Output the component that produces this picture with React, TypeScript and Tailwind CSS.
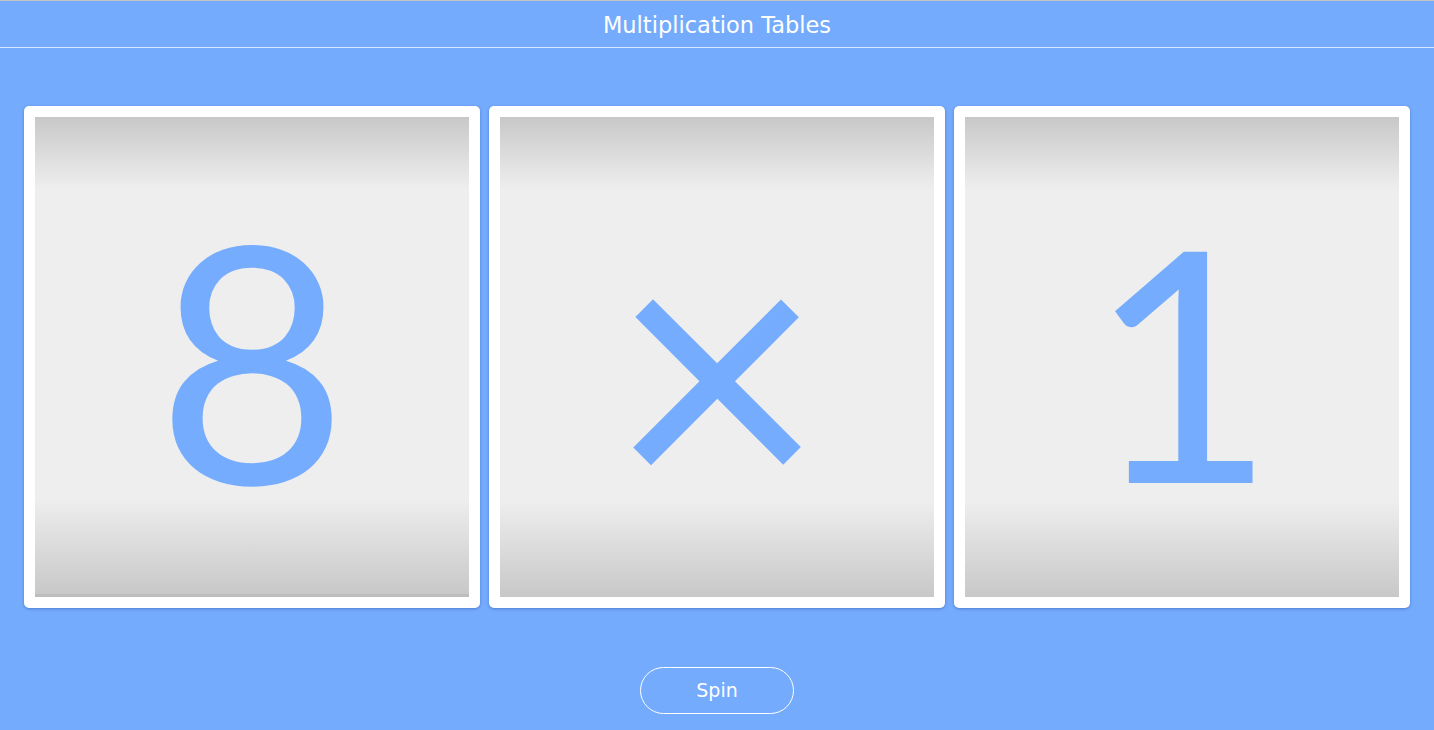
import React from "react";

const cards = [
  { value: "8", size: "text-[330px]", extra: "border-b-[3px] border-b-[#bdbdbd]" },
  { value: "×", size: "text-[372px] translate-y-[5px]", extra: "" },
  { value: "1", size: "text-[322px] translate-y-[2px]", extra: "" },
];

export default function App() {
  return (
    <div className="min-h-[730px] bg-[#74abfd] flex flex-col" style={{ fontFamily: '"DejaVu Sans", Verdana, sans-serif' }}>
      {/* Header */}
      <div className="h-[48px] border-t border-t-[#c4c4c4] border-b border-b-[#d6e6ff] flex items-center justify-center">
        <h1 className="text-[22.5px] text-white leading-none pt-[2px]">Multiplication Tables</h1>
      </div>

      {/* Reels */}
      <div className="mt-[58px] px-[24px] grid grid-cols-3 gap-[9px]">
        {cards.map((c, i) => (
          <div key={i} className="h-[502px] bg-white rounded-[5px] p-[11px] shadow-[0_1px_3px_rgba(0,40,120,0.35)]">
            <div
              className={`h-full bg-[linear-gradient(to_bottom,#c8c8c8_0%,#eeeeee_15%,#eeeeee_80%,#c8c8c8_100%)] flex items-center justify-center ${c.extra}`}
            >
              <span
                className={`text-[#76acfe] leading-none inline-block ${c.size}`}
                style={{ fontFamily: "Lato, sans-serif" }}
              >
                {c.value}
              </span>
            </div>
          </div>
        ))}
      </div>

      {/* Spin */}
      <div className="mt-[59px] flex justify-center">
        <button className="w-[154px] h-[47px] rounded-full border border-white text-white text-[19px]">
          Spin
        </button>
      </div>
    </div>
  );
}
